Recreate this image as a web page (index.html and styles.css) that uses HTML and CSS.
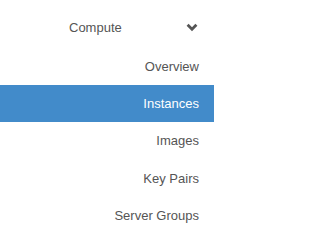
FILE: index.html
```html
<!DOCTYPE html>
<html>
<head>
<meta charset="utf-8">
<link rel="stylesheet" href="styles.css">
</head>
<body>
<nav class="sidebar">
  <div class="group-head">
    <span class="group-title">Compute</span>
    <svg class="chev" width="12" height="9" viewBox="0 0 12 9"><path d="M1.6 1.8 L6 6.2 L10.4 1.8" fill="none" stroke="#555" stroke-width="2.8" stroke-linejoin="miter"/></svg>
  </div>
  <ul class="items">
    <li class="item">Overview</li>
    <li class="item active">Instances</li>
    <li class="item">Images</li>
    <li class="item">Key Pairs</li>
    <li class="item">Server Groups</li>
  </ul>
</nav>
</body>
</html>
```
FILE: styles.css
```css
html, body {
  margin: 0;
  padding: 0;
  background: #fff;
}
body {
  font-family: "Liberation Sans", Arial, sans-serif;
  font-size: 13px;
  color: #555;
  overflow: hidden;
}
.sidebar {
  width: 214px;
}
.group-head {
  display: flex;
  align-items: center;
  height: 47.67px;
  box-sizing: border-box;
  padding: 7px 16px 0 69px;
  line-height: 17.33px;
}
.chev {
  margin-left: auto;
  display: block;
}
.items {
  list-style: none;
  margin: 0;
  padding: 0;
}
.item {
  padding: 10px 15px;
  line-height: 17.33px;
  text-align: right;
}
.item.active {
  background: #428bca;
  color: #fff;
}
```
